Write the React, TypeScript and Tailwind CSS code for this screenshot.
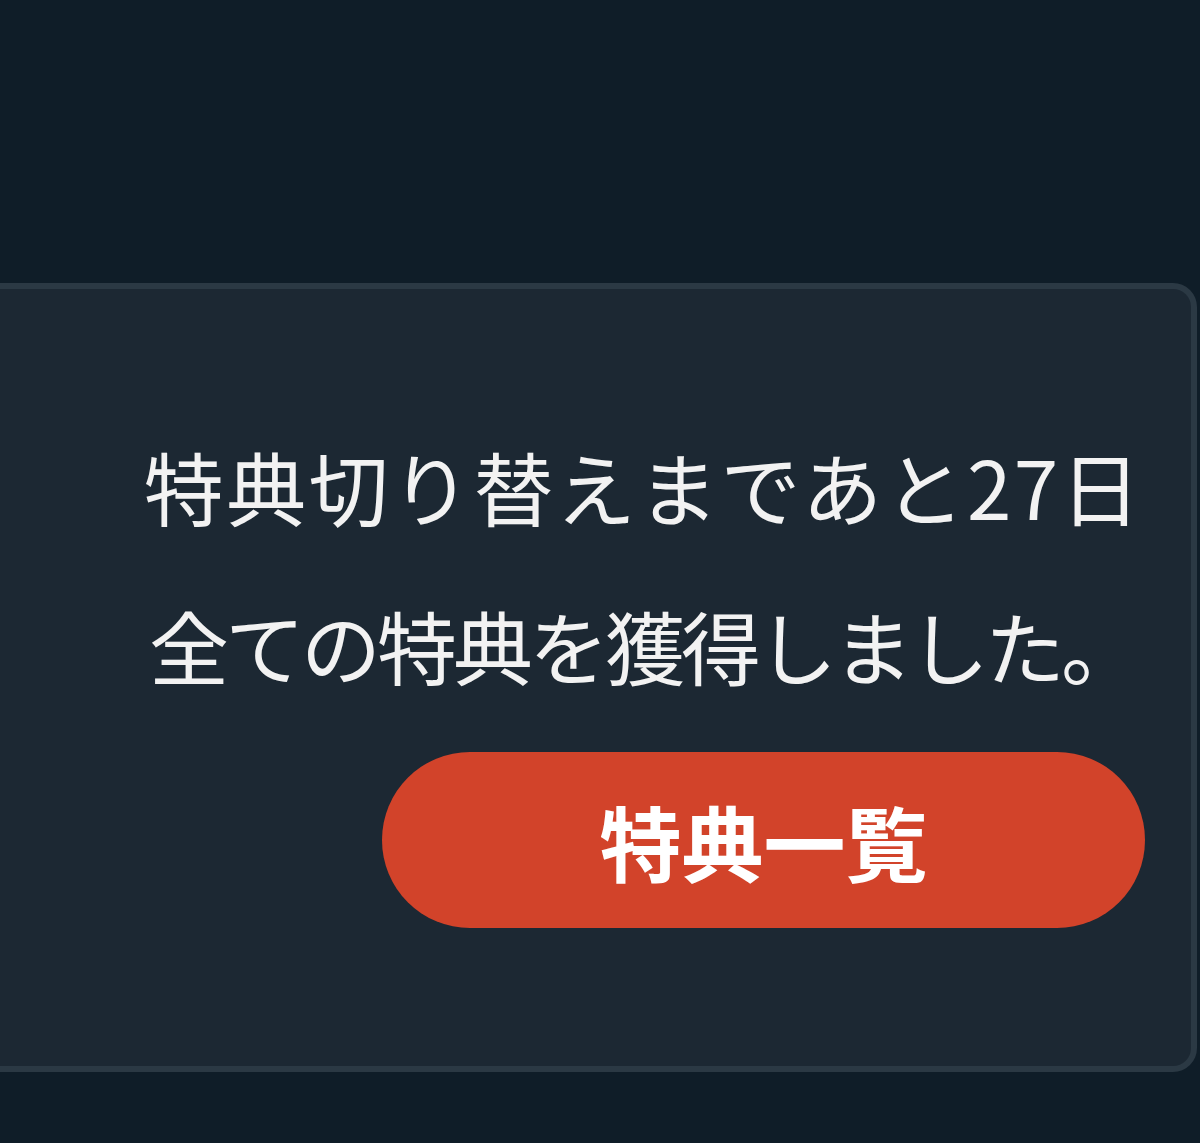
export default function App() {
  return (
    <div
      className="min-h-[1143px] w-[1200px] bg-[#0f1d28] pt-[283px]"
      style={{ fontFamily: '"Noto Sans CJK JP", "Noto Sans", sans-serif' }}
    >
      {/* Reward card */}
      <div className="mr-[3px] h-[789px] rounded-r-[24px] border-y-[6px] border-r-[6px] border-[#2b3944] bg-[#1c2833] pr-[46px] pt-[136px]">
        <div className="flex flex-col items-end">
          <p className="mr-[2px] text-[80px] leading-[120px] tracking-[2.4px] text-[#f2f2f2]">
            特典切り替えまであと27日
          </p>
          <p className="mr-[8px] mt-[39px] text-[80px] leading-[120px] tracking-[-4px] text-[#f2f2f2]">
            全ての特典を獲得しました。
          </p>
          <button className="mt-[48px] flex h-[176px] w-[763px] items-center justify-center rounded-full bg-[#d2432a] text-[82px] font-bold text-white">
            特典一覧
          </button>
        </div>
      </div>
    </div>
  )
}
